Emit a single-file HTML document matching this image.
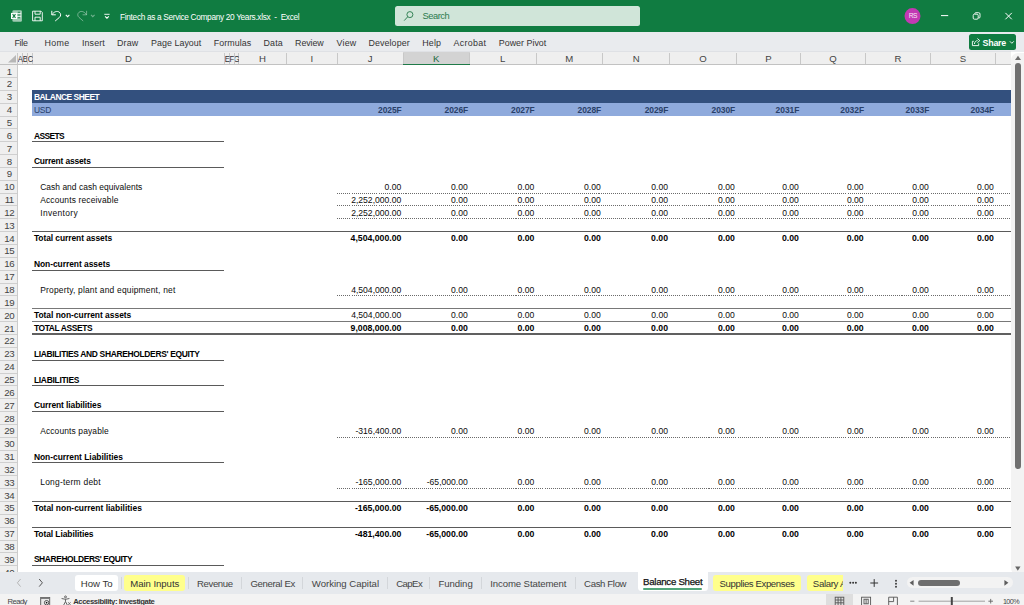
<!DOCTYPE html>
<html lang="en"><head><meta charset="utf-8"><title>Excel - Balance Sheet</title>
<style>
html,body{margin:0;padding:0}
body{width:1024px;height:605px;overflow:hidden;position:relative;background:#fff;font-family:"Liberation Sans", sans-serif;}
.abs{position:absolute}
.t{position:absolute;white-space:pre;line-height:12px;height:12px}
.titlebar{position:absolute;left:0;top:0;width:1024px;height:31.6px;background:#107c41}
.search{position:absolute;left:395.1px;top:5.6px;width:245px;height:20.7px;background:#d0e5d9;border-radius:2.5px}
.ribbon{position:absolute;left:0;top:31.6px;width:1024px;height:20.6px;background:#e9ebee}
.share{position:absolute;left:969px;top:34px;width:47.2px;height:16px;background:#107c41;border-radius:2.5px}
.colhdr{position:absolute;left:0;top:52px;width:1011px;height:12.4px;background:#efefef}
.ch{position:absolute;top:53.2px;height:11.2px;line-height:12px;font-size:9.6px;text-align:center;overflow:hidden;white-space:nowrap}
.ch{display:flex;justify-content:center}
.rowhdr{position:absolute;left:0;top:64.5px;width:17.2px;height:507.600px;background:#efefef;border-right:.9px solid #cbcbcb}
.rh{position:absolute;left:0;width:18.4px;height:12.85px;line-height:13.45px;font-size:9.7px;letter-spacing:-.5px;text-align:center;color:#444}
.dot{position:absolute;height:1px;background:repeating-linear-gradient(90deg,#6a6a6a 0,#6a6a6a .95px,transparent .95px,transparent 1.93px)}
.vtrack{position:absolute;left:1011.4px;top:53px;width:14px;height:521.600px;background:#f3f3f3;border-radius:7px 0 0 7px}
.vthumb{position:absolute;left:1015px;top:63.4px;width:5.900px;height:405.4px;background:#707070;border-radius:3px}
.tabbar{position:absolute;left:0;top:572.1px;width:1024px;height:21.7px;background:#e6e9ed}
.status{position:absolute;left:0;top:593.8px;width:1024px;height:11.2px;background:#f3f3f3}
.clip{position:absolute;left:0;top:0;width:1024px;height:572.1px;overflow:hidden}
</style></head>
<body>
<div class="titlebar"></div>
<svg class="abs" style="left:0;top:0" width="1024" height="32" viewBox="0 0 1024 32" fill="none" stroke="#fff" stroke-width="1">
<!-- excel logo -->
<rect x="12.400" y="10.200" width="9.500" height="11.600" rx="1.300" fill="#fff" fill-opacity=".6" stroke="none"/>
<path d="M17 13.500H21.200M17 16.400H21.200" stroke="#fff" stroke-opacity=".85" stroke-width=".8"/>
<path d="M17.800 12.200H20M17.800 15H20M17.800 17.700H20" stroke="#107c41" stroke-width="1.100" stroke-opacity=".9"/>
<rect x="11" y="12.900" width="6.100" height="6.100" fill="#fff" stroke="none"/>
<path d="M12.600 14.100L15.500 17.800M15.500 14.100L12.600 17.800" stroke="#107c41" stroke-width="1.150"/>
<!-- save -->
<path d="M32.6 11.2H41L42.3 12.5V20.8H32.6Z" stroke-width=".9"/>
<path d="M35 11.2V14.2H40.2V11.2M35 20.8V17.2H40.2V20.8" stroke-width=".9"/>
<!-- undo -->
<path d="M51.8 10.8V14.8H55.8" stroke-width="1"/>
<path d="M52 14.6C54 11.6 57.2 10.6 59.3 12.2C61.2 13.8 61 16 59.4 17.4L55.2 21" stroke-width="1"/>
<path d="M65.800 14.800L67.600 16.600L69.400 14.800" stroke-width="1.100"/>
<!-- redo (dim) -->
<g stroke-opacity=".4"><path d="M86.6 10.8V14.8H82.6" stroke-width="1"/>
<path d="M86.4 14.6C84.4 11.6 81.2 10.6 79.1 12.2C77.2 13.8 77.4 16 79 17.4L83.2 21" stroke-width="1"/>
<path d="M91 14.800L92.800 16.600L94.600 14.800" stroke-width="1.100"/></g>
<!-- customize -->
<path d="M104.300 14.300H109.600" stroke-width=".9"/><path d="M105.100 16.400L106.950 18.200L108.800 16.400" stroke-width="1.100"/>
<circle cx="912.5" cy="16.1" r="8" fill="#c239b3" stroke="none"/>
<!-- window controls -->
<path d="M941 15.6H948.2" stroke-width="1"/>
<rect x="973.2" y="14.2" width="5" height="5" rx="1.2" stroke-width=".9"/>
<path d="M974.8 13.9V13.6Q974.8 12.7 975.8 12.7H978.6Q980 12.7 980 14V17Q980 18 979 18H978.6" stroke-width=".9"/>
<path d="M1005.4 12.900L1011.800 19.3M1011.800 12.900L1005.4 19.3" stroke-width="1"/>
</svg>
<div class="search"></div>
<svg class="abs" style="left:400px;top:8px" width="16" height="16" viewBox="0 0 16 16" fill="none" stroke="#358457" stroke-width="1"><circle cx="9.900" cy="6.600" r="3"/><path d="M7.700 8.800L4.200 12.600"/></svg>
<div class="ribbon"></div>
<div class="share"></div>
<svg class="abs" style="left:969px;top:34px" width="14" height="16" viewBox="0 0 14 16" fill="none" stroke="#fff" stroke-width=".9"><path d="M4.8 7.300H3.400V11.600H9.700V9.400"/><path d="M5.400 10C5.600 8 6.800 6.700 8.600 6.600M8.400 4.500L10.800 6.600L8.400 8.700"/></svg>
<svg class="abs" style="left:1008px;top:38px" width="8" height="8" viewBox="0 0 8 8" fill="none" stroke="#fff" stroke-width=".9"><path d="M1.9 3.3L3.850 5.300L5.800 3.3"/></svg>
<div class="colhdr"></div>
<div class="abs" style="left:0;top:51.4px;width:1011px;height:1px;background:#dfe1e5"></div>
<div class="abs" style="left:403px;top:52px;width:66.5px;height:12.5px;background:#d3d3d3;border-bottom:1.2px solid #1e7145;box-sizing:border-box"></div>
<div class="abs" style="left:17.3px;top:52.6px;width:.9px;height:11.6px;background:#c8c8c8"></div>
<div class="abs" style="left:22.1px;top:52.6px;width:.9px;height:11.6px;background:#c8c8c8"></div>
<div class="abs" style="left:26.8px;top:52.6px;width:.9px;height:11.6px;background:#c8c8c8"></div>
<div class="abs" style="left:32.0px;top:52.6px;width:.9px;height:11.6px;background:#c8c8c8"></div>
<div class="abs" style="left:224.0px;top:52.6px;width:.9px;height:11.6px;background:#c8c8c8"></div>
<div class="abs" style="left:229.0px;top:52.6px;width:.9px;height:11.6px;background:#c8c8c8"></div>
<div class="abs" style="left:234.2px;top:52.6px;width:.9px;height:11.6px;background:#c8c8c8"></div>
<div class="abs" style="left:238.3px;top:52.6px;width:.9px;height:11.6px;background:#c8c8c8"></div>
<div class="abs" style="left:285.9px;top:52.6px;width:.9px;height:11.6px;background:#c8c8c8"></div>
<div class="abs" style="left:337.1px;top:52.6px;width:.9px;height:11.6px;background:#c8c8c8"></div>
<div class="abs" style="left:402.6px;top:52.6px;width:.9px;height:11.6px;background:#c8c8c8"></div>
<div class="abs" style="left:469.1px;top:52.6px;width:.9px;height:11.6px;background:#c8c8c8"></div>
<div class="abs" style="left:535.6px;top:52.6px;width:.9px;height:11.6px;background:#c8c8c8"></div>
<div class="abs" style="left:602.1px;top:52.6px;width:.9px;height:11.6px;background:#c8c8c8"></div>
<div class="abs" style="left:669.3px;top:52.6px;width:.9px;height:11.6px;background:#c8c8c8"></div>
<div class="abs" style="left:736.1px;top:52.6px;width:.9px;height:11.6px;background:#c8c8c8"></div>
<div class="abs" style="left:800.2px;top:52.6px;width:.9px;height:11.6px;background:#c8c8c8"></div>
<div class="abs" style="left:864.9px;top:52.6px;width:.9px;height:11.6px;background:#c8c8c8"></div>
<div class="abs" style="left:930.2px;top:52.6px;width:.9px;height:11.6px;background:#c8c8c8"></div>
<div class="abs" style="left:995.1px;top:52.6px;width:.9px;height:11.6px;background:#c8c8c8"></div>
<div class="abs" style="left:0;top:64px;width:1011px;height:.9px;background:#c2c2c2"></div>
<div class="abs" style="left:403px;top:63.6px;width:66.5px;height:1.3px;background:#1f7a48"></div>
<svg class="abs" style="left:7px;top:54px" width="10" height="10" viewBox="0 0 10 10"><path d="M9 1V8.600H1Z" fill="#b7b7b7"/></svg>
<div class="ch" style="left:17.8px;width:4.9px;color:#333;overflow:hidden"><span style="display:inline-block;transform:scaleX(.8);transform-origin:50% 50%">A</span></div>
<div class="ch" style="left:22.8px;width:4.6px;color:#333;overflow:hidden"><span style="display:inline-block;transform:scaleX(.8);transform-origin:50% 50%">B</span></div>
<div class="ch" style="left:27.5px;width:5.1px;color:#333;overflow:hidden"><span style="display:inline-block;transform:scaleX(.8);transform-origin:50% 50%">C</span></div>
<div class="ch" style="left:32.4px;width:192.0px;color:#444">D</div>
<div class="ch" style="left:224.7px;width:4.9px;color:#333;overflow:hidden"><span style="display:inline-block;transform:scaleX(.8);transform-origin:50% 50%">E</span></div>
<div class="ch" style="left:229.7px;width:5.1px;color:#333;overflow:hidden"><span style="display:inline-block;transform:scaleX(.8);transform-origin:50% 50%">F</span></div>
<div class="ch" style="left:234.9px;width:4.0px;color:#333;overflow:hidden"><span style="display:inline-block;transform:scaleX(.8);transform-origin:50% 50%">G</span></div>
<div class="ch" style="left:238.7px;width:47.6px;color:#444">H</div>
<div class="ch" style="left:286.3px;width:51.2px;color:#444">I</div>
<div class="ch" style="left:337.5px;width:65.5px;color:#444">J</div>
<div class="ch" style="left:403.0px;width:66.5px;color:#1e6b41">K</div>
<div class="ch" style="left:469.5px;width:66.5px;color:#444">L</div>
<div class="ch" style="left:536.0px;width:66.5px;color:#444">M</div>
<div class="ch" style="left:602.5px;width:67.2px;color:#444">N</div>
<div class="ch" style="left:669.7px;width:66.8px;color:#444">O</div>
<div class="ch" style="left:736.5px;width:64.1px;color:#444">P</div>
<div class="ch" style="left:800.6px;width:64.7px;color:#444">Q</div>
<div class="ch" style="left:865.3px;width:65.3px;color:#444">R</div>
<div class="ch" style="left:930.6px;width:64.9px;color:#444">S</div>
<div class="rowhdr"></div>
<div class="rh" style="top:64.55px">1</div>
<div class="abs" style="left:0;top:76.95px;width:17.4px;height:.9px;background:#cfcfcf"></div>
<div class="rh" style="top:77.40px">2</div>
<div class="abs" style="left:0;top:89.80px;width:17.4px;height:.9px;background:#cfcfcf"></div>
<div class="rh" style="top:90.25px">3</div>
<div class="abs" style="left:0;top:102.65px;width:17.4px;height:.9px;background:#cfcfcf"></div>
<div class="rh" style="top:103.10px">4</div>
<div class="abs" style="left:0;top:115.50px;width:17.4px;height:.9px;background:#cfcfcf"></div>
<div class="rh" style="top:115.95px">5</div>
<div class="abs" style="left:0;top:128.35px;width:17.4px;height:.9px;background:#cfcfcf"></div>
<div class="rh" style="top:128.80px">6</div>
<div class="abs" style="left:0;top:141.20px;width:17.4px;height:.9px;background:#cfcfcf"></div>
<div class="rh" style="top:141.65px">7</div>
<div class="abs" style="left:0;top:154.05px;width:17.4px;height:.9px;background:#cfcfcf"></div>
<div class="rh" style="top:154.50px">8</div>
<div class="abs" style="left:0;top:166.90px;width:17.4px;height:.9px;background:#cfcfcf"></div>
<div class="rh" style="top:167.35px">9</div>
<div class="abs" style="left:0;top:179.75px;width:17.4px;height:.9px;background:#cfcfcf"></div>
<div class="rh" style="top:180.20px">10</div>
<div class="abs" style="left:0;top:192.60px;width:17.4px;height:.9px;background:#cfcfcf"></div>
<div class="rh" style="top:193.05px">11</div>
<div class="abs" style="left:0;top:205.45px;width:17.4px;height:.9px;background:#cfcfcf"></div>
<div class="rh" style="top:205.90px">12</div>
<div class="abs" style="left:0;top:218.30px;width:17.4px;height:.9px;background:#cfcfcf"></div>
<div class="rh" style="top:218.75px">13</div>
<div class="abs" style="left:0;top:231.15px;width:17.4px;height:.9px;background:#cfcfcf"></div>
<div class="rh" style="top:231.60px">14</div>
<div class="abs" style="left:0;top:244.00px;width:17.4px;height:.9px;background:#cfcfcf"></div>
<div class="rh" style="top:244.45px">15</div>
<div class="abs" style="left:0;top:256.85px;width:17.4px;height:.9px;background:#cfcfcf"></div>
<div class="rh" style="top:257.30px">16</div>
<div class="abs" style="left:0;top:269.70px;width:17.4px;height:.9px;background:#cfcfcf"></div>
<div class="rh" style="top:270.15px">17</div>
<div class="abs" style="left:0;top:282.55px;width:17.4px;height:.9px;background:#cfcfcf"></div>
<div class="rh" style="top:283.00px">18</div>
<div class="abs" style="left:0;top:295.40px;width:17.4px;height:.9px;background:#cfcfcf"></div>
<div class="rh" style="top:295.85px">19</div>
<div class="abs" style="left:0;top:308.25px;width:17.4px;height:.9px;background:#cfcfcf"></div>
<div class="rh" style="top:308.70px">20</div>
<div class="abs" style="left:0;top:321.10px;width:17.4px;height:.9px;background:#cfcfcf"></div>
<div class="rh" style="top:321.55px">21</div>
<div class="abs" style="left:0;top:333.95px;width:17.4px;height:.9px;background:#cfcfcf"></div>
<div class="rh" style="top:334.40px">22</div>
<div class="abs" style="left:0;top:346.80px;width:17.4px;height:.9px;background:#cfcfcf"></div>
<div class="rh" style="top:347.25px">23</div>
<div class="abs" style="left:0;top:359.65px;width:17.4px;height:.9px;background:#cfcfcf"></div>
<div class="rh" style="top:360.10px">24</div>
<div class="abs" style="left:0;top:372.50px;width:17.4px;height:.9px;background:#cfcfcf"></div>
<div class="rh" style="top:372.95px">25</div>
<div class="abs" style="left:0;top:385.35px;width:17.4px;height:.9px;background:#cfcfcf"></div>
<div class="rh" style="top:385.80px">26</div>
<div class="abs" style="left:0;top:398.20px;width:17.4px;height:.9px;background:#cfcfcf"></div>
<div class="rh" style="top:398.65px">27</div>
<div class="abs" style="left:0;top:411.05px;width:17.4px;height:.9px;background:#cfcfcf"></div>
<div class="rh" style="top:411.50px">28</div>
<div class="abs" style="left:0;top:423.90px;width:17.4px;height:.9px;background:#cfcfcf"></div>
<div class="rh" style="top:424.35px">29</div>
<div class="abs" style="left:0;top:436.75px;width:17.4px;height:.9px;background:#cfcfcf"></div>
<div class="rh" style="top:437.20px">30</div>
<div class="abs" style="left:0;top:449.60px;width:17.4px;height:.9px;background:#cfcfcf"></div>
<div class="rh" style="top:450.05px">31</div>
<div class="abs" style="left:0;top:462.45px;width:17.4px;height:.9px;background:#cfcfcf"></div>
<div class="rh" style="top:462.90px">32</div>
<div class="abs" style="left:0;top:475.30px;width:17.4px;height:.9px;background:#cfcfcf"></div>
<div class="rh" style="top:475.75px">33</div>
<div class="abs" style="left:0;top:488.15px;width:17.4px;height:.9px;background:#cfcfcf"></div>
<div class="rh" style="top:488.60px">34</div>
<div class="abs" style="left:0;top:501.00px;width:17.4px;height:.9px;background:#cfcfcf"></div>
<div class="rh" style="top:501.45px">35</div>
<div class="abs" style="left:0;top:513.85px;width:17.4px;height:.9px;background:#cfcfcf"></div>
<div class="rh" style="top:514.30px">36</div>
<div class="abs" style="left:0;top:526.70px;width:17.4px;height:.9px;background:#cfcfcf"></div>
<div class="rh" style="top:527.15px">37</div>
<div class="abs" style="left:0;top:539.55px;width:17.4px;height:.9px;background:#cfcfcf"></div>
<div class="rh" style="top:540.00px">38</div>
<div class="abs" style="left:0;top:552.40px;width:17.4px;height:.9px;background:#cfcfcf"></div>
<div class="rh" style="top:552.85px">39</div>
<div class="abs" style="left:0;top:565.25px;width:17.4px;height:.9px;background:#cfcfcf"></div>
<div class="rh" style="top:565.70px">40</div>
<div class="abs" style="left:0;top:578.10px;width:17.4px;height:.9px;background:#cfcfcf"></div>
<div class="abs" style="left:32.3px;top:90.05px;width:978.7px;height:13.05px;background:#33507e"></div>
<div class="abs" style="left:32.3px;top:103.10px;width:978.7px;height:13.15px;background:#8faadc"></div>
<div class="abs" style="left:32.3px;top:141.20px;width:192.1px;height:0.9px;background:#5a5a5a"></div>
<div class="abs" style="left:32.3px;top:166.90px;width:192.1px;height:0.9px;background:#5a5a5a"></div>
<div class="abs" style="left:32.3px;top:269.70px;width:192.1px;height:0.9px;background:#5a5a5a"></div>
<div class="abs" style="left:32.3px;top:359.65px;width:192.1px;height:0.9px;background:#5a5a5a"></div>
<div class="abs" style="left:32.3px;top:385.35px;width:192.1px;height:0.9px;background:#5a5a5a"></div>
<div class="abs" style="left:32.3px;top:411.05px;width:192.1px;height:0.9px;background:#5a5a5a"></div>
<div class="abs" style="left:32.3px;top:462.45px;width:192.1px;height:0.9px;background:#5a5a5a"></div>
<div class="abs" style="left:32.3px;top:565.25px;width:192.1px;height:0.9px;background:#5a5a5a"></div>
<div class="abs" style="left:32.3px;top:231.15px;width:978.3px;height:0.9px;background:#5a5a5a"></div>
<div class="abs" style="left:32.3px;top:501.00px;width:978.3px;height:0.9px;background:#5a5a5a"></div>
<div class="abs" style="left:32.3px;top:526.70px;width:978.3px;height:0.9px;background:#5a5a5a"></div>
<div class="abs" style="left:32.3px;top:308.20px;width:978.3px;height:1px;background:#787878"></div>
<div class="abs" style="left:32.3px;top:321.05px;width:978.3px;height:1px;background:#787878"></div>
<div class="abs" style="left:32.3px;top:333.35px;width:978.3px;height:1.7px;background:#606060"></div>
<div class="dot" style="left:337.2px;top:192.55px;width:673.2px"></div>
<div class="dot" style="left:337.2px;top:205.40px;width:673.2px"></div>
<div class="dot" style="left:337.2px;top:218.25px;width:673.2px"></div>
<div class="dot" style="left:337.2px;top:295.35px;width:673.2px"></div>
<div class="dot" style="left:337.2px;top:436.70px;width:673.2px"></div>
<div class="dot" style="left:337.2px;top:488.10px;width:673.2px"></div>
<div class="vtrack"></div><div class="vthumb"></div>
<svg class="abs" style="left:1014px;top:55px" width="8" height="6" viewBox="0 0 8 6"><path d="M4 .8L7 5H1Z" fill="#6e6e6e"/></svg>
<svg class="abs" style="left:1014px;top:565px" width="8" height="7" viewBox="0 0 8 7"><path d="M3.800 5.800L6.500 1.400H1.100Z" fill="#666"/></svg>
<div class="tabbar"></div>
<svg class="abs" style="left:12px;top:574px" width="40" height="16" viewBox="0 0 40 16" fill="none" stroke-width="1"><path d="M8.6 5L5.400 8.800L8.600 12.600" stroke="#b5b5b5"/><path d="M27.200 5L30.400 8.800L27.200 12.600" stroke="#555"/></svg>
<div class="abs" style="left:75.2px;top:575.2px;width:43.0px;height:15.4px;background:#fff;border-radius:3px"></div>
<div class="abs" style="left:124.4px;top:575.2px;width:61.1px;height:15.4px;background:#ffff8c;border-radius:3px"></div>
<div class="abs" style="left:121.1px;top:577px;width:.9px;height:11.5px;background:#d3d6da"></div>
<div class="abs" style="left:188.2px;top:577px;width:.9px;height:11.5px;background:#d3d6da"></div>
<div class="abs" style="left:241.1px;top:577px;width:.9px;height:11.5px;background:#d3d6da"></div>
<div class="abs" style="left:301.9px;top:577px;width:.9px;height:11.5px;background:#d3d6da"></div>
<div class="abs" style="left:387.2px;top:577px;width:.9px;height:11.5px;background:#d3d6da"></div>
<div class="abs" style="left:429.4px;top:577px;width:.9px;height:11.5px;background:#d3d6da"></div>
<div class="abs" style="left:481.3px;top:577px;width:.9px;height:11.5px;background:#d3d6da"></div>
<div class="abs" style="left:575.1px;top:577px;width:.9px;height:11.5px;background:#d3d6da"></div>
<div class="abs" style="left:637.6px;top:572px;width:70.2px;height:18.6px;background:#fff;border-radius:0 0 3.5px 3.5px"></div>
<div class="abs" style="left:643px;top:588px;width:59px;height:1.7px;background:#52a67a;border-radius:1px"></div>
<div class="abs" style="left:713.3px;top:575.2px;width:87.5px;height:15.4px;background:#ffff8c;border-radius:3px"></div>
<div class="abs" style="left:807px;top:575.2px;width:35.6px;height:15.4px;background:#ffff8c;border-radius:3px 0 0 3px;overflow:hidden"></div>
<div class="abs" style="left:807px;top:575.2px;width:35.6px;height:15.4px;overflow:hidden"><span id="salary" style="position:absolute;left:5.8px;top:2.7px;font-size:9.6px;color:#333;white-space:pre;line-height:12px;letter-spacing:-.32px">Salary As</span></div>
<svg class="abs" style="left:846px;top:574px" width="60" height="18" viewBox="0 0 60 18"><g fill="#333"><circle cx="4.3" cy="8.8" r="1"/><circle cx="7.1" cy="8.8" r="1"/><circle cx="9.9" cy="8.8" r="1"/><circle cx="50" cy="6.7" r=".95"/><circle cx="50" cy="9.7" r=".95"/><circle cx="50" cy="12.7" r=".95"/></g><path d="M24.3 9H32.1M28.2 5.100V12.900" stroke="#333" stroke-width="1" fill="none"/></svg>
<div class="abs" style="left:907px;top:577px;width:105.600px;height:11.4px;background:#f3f3f3;border-radius:6px"></div>
<div class="abs" style="left:917.8px;top:580px;width:42.6px;height:6px;background:#6e6e6e;border-radius:3px"></div>
<svg class="abs" style="left:909px;top:579px" width="102" height="8" viewBox="0 0 102 8"><path d="M.6 3.8L4.600 .9V6.700Z M99.400 3.8L95.4 .9V6.700Z" fill="#5e5e5e"/></svg>
<div class="status"></div>
<svg class="abs" style="left:38px;top:594px" width="36" height="11" viewBox="0 0 36 11" fill="none" stroke="#555" stroke-width=".9"><rect x="2.700" y="3.500" width="9" height="9" fill="#e9e9e9"/><path d="M2.700 4.100H11.700" stroke-width="1.700" stroke="#777"/><circle cx="8.600" cy="8.700" r="2.200" fill="#fff" stroke="#444"/><circle cx="8.600" cy="8.700" r=".9" fill="#111" stroke="none"/><circle cx="27.500" cy="2.900" r=".95"/><path d="M23.600 4.500L27.500 5.300L31.400 4.500M27.500 5.300V7.600L25.700 11M27.500 7.600L29.300 11"/><path d="M30.200 8.200L32.600 11M32.600 8.200L30.200 11" stroke-width=".7"/></svg>
<div class="abs" style="left:826px;top:594px;width:26.5px;height:11px;background:#dedede"></div>
<svg class="abs" style="left:826px;top:594px" width="198" height="11" viewBox="0 0 198 11" fill="none" stroke="#555" stroke-width=".9">
<rect x="9.200" y="3.200" width="8.6" height="8.4"/><path d="M9.200 6H17.800M9.200 8.800H17.800M12.100 3.200V11M14.900 3.200V11"/>
<rect x="35.600" y="3.200" width="9" height="8.4"/><rect x="38" y="5.200" width="4.2" height="4.6"/><path d="M40.100 5.200V9.800"/>
<path d="M62.700 11.600V3.200H71.400V11.600M67.600 3.200V7.600H62.700"/>
<path d="M84.2 7.200H88.400" stroke="#777"/><path d="M92.600 7.200H159" stroke="#8a8a8a" stroke-width=".8"/>
<path d="M125.800 3V11" stroke="#444" stroke-width="2"/>
<path d="M162.400 7.200H167M164.700 4.900V9.500" stroke="#666"/></svg>
<div class="t" id="t0" style="top:10.70px;font-size:8.3px;font-weight:400;color:#fff;letter-spacing:-0.332px;left:120.10px;">Fintech as a Service Company 20 Years.xlsx  -  Excel</div>
<div class="t" id="t1" style="top:9.90px;font-size:9.3px;font-weight:400;color:#2b7a4e;letter-spacing:-0.445px;left:422.50px;">Search</div>
<div class="t" id="t2" style="top:10.40px;font-size:6.6px;font-weight:400;color:#fbe9f8;letter-spacing:-0.600px;left:908.80px;">RS</div>
<div class="t" id="t3" style="top:36.60px;font-size:8.9px;font-weight:400;color:#343434;letter-spacing:-0.228px;left:14.40px;">File</div>
<div class="t" id="t4" style="top:36.60px;font-size:8.9px;font-weight:400;color:#343434;letter-spacing:0.403px;left:44.40px;">Home</div>
<div class="t" id="t5" style="top:36.60px;font-size:8.9px;font-weight:400;color:#343434;letter-spacing:0.133px;left:81.90px;">Insert</div>
<div class="t" id="t6" style="top:36.60px;font-size:8.9px;font-weight:400;color:#343434;letter-spacing:0.120px;left:117.10px;">Draw</div>
<div class="t" id="t7" style="top:36.60px;font-size:8.9px;font-weight:400;color:#343434;letter-spacing:0.032px;left:151.10px;">Page Layout</div>
<div class="t" id="t8" style="top:36.60px;font-size:8.9px;font-weight:400;color:#343434;letter-spacing:0.075px;left:213.80px;">Formulas</div>
<div class="t" id="t9" style="top:36.60px;font-size:8.9px;font-weight:400;color:#343434;letter-spacing:0.112px;left:263.60px;">Data</div>
<div class="t" id="t10" style="top:36.60px;font-size:8.9px;font-weight:400;color:#343434;letter-spacing:-0.085px;left:295.10px;">Review</div>
<div class="t" id="t11" style="top:36.60px;font-size:8.9px;font-weight:400;color:#343434;letter-spacing:0.255px;left:336.40px;">View</div>
<div class="t" id="t12" style="top:36.60px;font-size:8.9px;font-weight:400;color:#343434;letter-spacing:0.103px;left:368.40px;">Developer</div>
<div class="t" id="t13" style="top:36.60px;font-size:8.9px;font-weight:400;color:#343434;letter-spacing:0.159px;left:422.30px;">Help</div>
<div class="t" id="t14" style="top:36.60px;font-size:8.9px;font-weight:400;color:#343434;letter-spacing:0.301px;left:453.60px;">Acrobat</div>
<div class="t" id="t15" style="top:36.60px;font-size:8.9px;font-weight:400;color:#343434;letter-spacing:0.013px;left:498.80px;">Power Pivot</div>
<div class="t" id="t16" style="top:36.80px;font-size:8.9px;font-weight:700;color:#fff;letter-spacing:-0.274px;left:982.60px;">Share</div>
<div class="t" id="t17" style="top:90.97px;font-size:8.45px;font-weight:700;color:#fff;letter-spacing:-0.487px;left:33.90px;">BALANCE SHEET</div>
<div class="t" id="t18" style="top:103.82px;font-size:8.45px;font-weight:400;color:#294069;letter-spacing:-0.143px;left:33.90px;">USD</div>
<div class="t" id="t19" style="top:103.82px;font-size:8.45px;font-weight:700;color:#294069;letter-spacing:-0.048px;left:378.00px;">2025F</div>
<div class="t" id="t20" style="top:103.82px;font-size:8.45px;font-weight:700;color:#294069;letter-spacing:-0.048px;left:444.50px;">2026F</div>
<div class="t" id="t21" style="top:103.82px;font-size:8.45px;font-weight:700;color:#294069;letter-spacing:-0.048px;left:511.00px;">2027F</div>
<div class="t" id="t22" style="top:103.82px;font-size:8.45px;font-weight:700;color:#294069;letter-spacing:-0.048px;left:577.50px;">2028F</div>
<div class="t" id="t23" style="top:103.82px;font-size:8.45px;font-weight:700;color:#294069;letter-spacing:-0.048px;left:644.70px;">2029F</div>
<div class="t" id="t24" style="top:103.82px;font-size:8.45px;font-weight:700;color:#294069;letter-spacing:-0.048px;left:711.50px;">2030F</div>
<div class="t" id="t25" style="top:103.82px;font-size:8.45px;font-weight:700;color:#294069;letter-spacing:-0.048px;left:775.60px;">2031F</div>
<div class="t" id="t26" style="top:103.82px;font-size:8.45px;font-weight:700;color:#294069;letter-spacing:-0.048px;left:840.30px;">2032F</div>
<div class="t" id="t27" style="top:103.82px;font-size:8.45px;font-weight:700;color:#294069;letter-spacing:-0.048px;left:905.60px;">2033F</div>
<div class="t" id="t28" style="top:103.82px;font-size:8.45px;font-weight:700;color:#294069;letter-spacing:-0.048px;left:970.50px;">2034F</div>
<div class="t" id="t29" style="top:129.53px;font-size:8.45px;font-weight:700;color:#000;letter-spacing:-0.594px;left:33.90px;">ASSETS</div>
<div class="t" id="t30" style="top:155.23px;font-size:8.45px;font-weight:700;color:#000;letter-spacing:-0.157px;left:33.90px;">Current assets</div>
<div class="t" id="t31" style="top:232.32px;font-size:8.45px;font-weight:700;color:#000;letter-spacing:-0.068px;left:33.90px;">Total current assets</div>
<div class="t" id="t32" style="top:258.03px;font-size:8.45px;font-weight:700;color:#000;letter-spacing:-0.039px;left:33.90px;">Non-current assets</div>
<div class="t" id="t33" style="top:309.43px;font-size:8.45px;font-weight:700;color:#000;letter-spacing:-0.018px;left:33.90px;">Total non-current assets</div>
<div class="t" id="t34" style="top:322.28px;font-size:8.45px;font-weight:700;color:#000;letter-spacing:-0.382px;left:33.90px;">TOTAL ASSETS</div>
<div class="t" id="t35" style="top:347.98px;font-size:8.45px;font-weight:700;color:#000;letter-spacing:-0.327px;left:33.90px;">LIABILITIES AND SHAREHOLDERS&#x27; EQUITY</div>
<div class="t" id="t36" style="top:373.68px;font-size:8.45px;font-weight:700;color:#000;letter-spacing:-0.280px;left:33.90px;">LIABILITIES</div>
<div class="t" id="t37" style="top:399.38px;font-size:8.45px;font-weight:700;color:#000;letter-spacing:-0.080px;left:33.90px;">Current liabilities</div>
<div class="t" id="t38" style="top:450.78px;font-size:8.45px;font-weight:700;color:#000;letter-spacing:-0.024px;left:33.90px;">Non-current Liabilities</div>
<div class="t" id="t39" style="top:502.18px;font-size:8.45px;font-weight:700;color:#000;letter-spacing:0.011px;left:33.90px;">Total non-current liabilities</div>
<div class="t" id="t40" style="top:527.87px;font-size:8.45px;font-weight:700;color:#000;letter-spacing:-0.070px;left:33.90px;">Total Liabilities</div>
<div class="t" id="t41" style="top:553.37px;font-size:8.45px;font-weight:700;color:#000;letter-spacing:-0.408px;left:33.90px;">SHAREHOLDERS&#x27; EQUITY</div>
<div class="t" id="t42" style="top:180.93px;font-size:8.45px;font-weight:400;color:#0c0c0c;letter-spacing:0.031px;left:40.20px;">Cash and cash equivalents</div>
<div class="t" id="t43" style="top:193.78px;font-size:8.45px;font-weight:400;color:#0c0c0c;letter-spacing:0.147px;left:40.20px;">Accounts receivable</div>
<div class="t" id="t44" style="top:206.62px;font-size:8.45px;font-weight:400;color:#0c0c0c;letter-spacing:0.353px;left:40.20px;">Inventory</div>
<div class="t" id="t45" style="top:283.73px;font-size:8.45px;font-weight:400;color:#0c0c0c;letter-spacing:0.190px;left:40.20px;">Property, plant and equipment, net</div>
<div class="t" id="t46" style="top:425.08px;font-size:8.45px;font-weight:400;color:#0c0c0c;letter-spacing:0.124px;left:40.20px;">Accounts payable</div>
<div class="t" id="t47" style="top:476.48px;font-size:8.45px;font-weight:400;color:#0c0c0c;letter-spacing:0.248px;left:40.20px;">Long-term debt</div>
<div class="t" id="t48" style="top:180.93px;font-size:8.6px;font-weight:400;color:#0c0c0c;letter-spacing:0.000px;right:622.70px;">0.00</div>
<div class="t" id="t49" style="top:180.93px;font-size:8.6px;font-weight:400;color:#0c0c0c;letter-spacing:0.000px;right:556.20px;">0.00</div>
<div class="t" id="t50" style="top:180.93px;font-size:8.6px;font-weight:400;color:#0c0c0c;letter-spacing:0.000px;right:489.70px;">0.00</div>
<div class="t" id="t51" style="top:180.93px;font-size:8.6px;font-weight:400;color:#0c0c0c;letter-spacing:0.000px;right:423.20px;">0.00</div>
<div class="t" id="t52" style="top:180.93px;font-size:8.6px;font-weight:400;color:#0c0c0c;letter-spacing:0.000px;right:356.00px;">0.00</div>
<div class="t" id="t53" style="top:180.93px;font-size:8.6px;font-weight:400;color:#0c0c0c;letter-spacing:0.000px;right:289.20px;">0.00</div>
<div class="t" id="t54" style="top:180.93px;font-size:8.6px;font-weight:400;color:#0c0c0c;letter-spacing:0.000px;right:225.10px;">0.00</div>
<div class="t" id="t55" style="top:180.93px;font-size:8.6px;font-weight:400;color:#0c0c0c;letter-spacing:0.000px;right:160.40px;">0.00</div>
<div class="t" id="t56" style="top:180.93px;font-size:8.6px;font-weight:400;color:#0c0c0c;letter-spacing:0.000px;right:95.10px;">0.00</div>
<div class="t" id="t57" style="top:180.93px;font-size:8.6px;font-weight:400;color:#0c0c0c;letter-spacing:0.000px;right:30.20px;">0.00</div>
<div class="t" id="t58" style="top:193.78px;font-size:8.6px;font-weight:400;color:#0c0c0c;letter-spacing:0.000px;right:622.70px;">2,252,000.00</div>
<div class="t" id="t59" style="top:193.78px;font-size:8.6px;font-weight:400;color:#0c0c0c;letter-spacing:0.000px;right:556.20px;">0.00</div>
<div class="t" id="t60" style="top:193.78px;font-size:8.6px;font-weight:400;color:#0c0c0c;letter-spacing:0.000px;right:489.70px;">0.00</div>
<div class="t" id="t61" style="top:193.78px;font-size:8.6px;font-weight:400;color:#0c0c0c;letter-spacing:0.000px;right:423.20px;">0.00</div>
<div class="t" id="t62" style="top:193.78px;font-size:8.6px;font-weight:400;color:#0c0c0c;letter-spacing:0.000px;right:356.00px;">0.00</div>
<div class="t" id="t63" style="top:193.78px;font-size:8.6px;font-weight:400;color:#0c0c0c;letter-spacing:0.000px;right:289.20px;">0.00</div>
<div class="t" id="t64" style="top:193.78px;font-size:8.6px;font-weight:400;color:#0c0c0c;letter-spacing:0.000px;right:225.10px;">0.00</div>
<div class="t" id="t65" style="top:193.78px;font-size:8.6px;font-weight:400;color:#0c0c0c;letter-spacing:0.000px;right:160.40px;">0.00</div>
<div class="t" id="t66" style="top:193.78px;font-size:8.6px;font-weight:400;color:#0c0c0c;letter-spacing:0.000px;right:95.10px;">0.00</div>
<div class="t" id="t67" style="top:193.78px;font-size:8.6px;font-weight:400;color:#0c0c0c;letter-spacing:0.000px;right:30.20px;">0.00</div>
<div class="t" id="t68" style="top:206.62px;font-size:8.6px;font-weight:400;color:#0c0c0c;letter-spacing:0.000px;right:622.70px;">2,252,000.00</div>
<div class="t" id="t69" style="top:206.62px;font-size:8.6px;font-weight:400;color:#0c0c0c;letter-spacing:0.000px;right:556.20px;">0.00</div>
<div class="t" id="t70" style="top:206.62px;font-size:8.6px;font-weight:400;color:#0c0c0c;letter-spacing:0.000px;right:489.70px;">0.00</div>
<div class="t" id="t71" style="top:206.62px;font-size:8.6px;font-weight:400;color:#0c0c0c;letter-spacing:0.000px;right:423.20px;">0.00</div>
<div class="t" id="t72" style="top:206.62px;font-size:8.6px;font-weight:400;color:#0c0c0c;letter-spacing:0.000px;right:356.00px;">0.00</div>
<div class="t" id="t73" style="top:206.62px;font-size:8.6px;font-weight:400;color:#0c0c0c;letter-spacing:0.000px;right:289.20px;">0.00</div>
<div class="t" id="t74" style="top:206.62px;font-size:8.6px;font-weight:400;color:#0c0c0c;letter-spacing:0.000px;right:225.10px;">0.00</div>
<div class="t" id="t75" style="top:206.62px;font-size:8.6px;font-weight:400;color:#0c0c0c;letter-spacing:0.000px;right:160.40px;">0.00</div>
<div class="t" id="t76" style="top:206.62px;font-size:8.6px;font-weight:400;color:#0c0c0c;letter-spacing:0.000px;right:95.10px;">0.00</div>
<div class="t" id="t77" style="top:206.62px;font-size:8.6px;font-weight:400;color:#0c0c0c;letter-spacing:0.000px;right:30.20px;">0.00</div>
<div class="t" id="t78" style="top:232.32px;font-size:8.7px;font-weight:700;color:#000;letter-spacing:0.000px;right:622.70px;">4,504,000.00</div>
<div class="t" id="t79" style="top:232.32px;font-size:8.7px;font-weight:700;color:#000;letter-spacing:0.000px;right:556.20px;">0.00</div>
<div class="t" id="t80" style="top:232.32px;font-size:8.7px;font-weight:700;color:#000;letter-spacing:0.000px;right:489.70px;">0.00</div>
<div class="t" id="t81" style="top:232.32px;font-size:8.7px;font-weight:700;color:#000;letter-spacing:0.000px;right:423.20px;">0.00</div>
<div class="t" id="t82" style="top:232.32px;font-size:8.7px;font-weight:700;color:#000;letter-spacing:0.000px;right:356.00px;">0.00</div>
<div class="t" id="t83" style="top:232.32px;font-size:8.7px;font-weight:700;color:#000;letter-spacing:0.000px;right:289.20px;">0.00</div>
<div class="t" id="t84" style="top:232.32px;font-size:8.7px;font-weight:700;color:#000;letter-spacing:0.000px;right:225.10px;">0.00</div>
<div class="t" id="t85" style="top:232.32px;font-size:8.7px;font-weight:700;color:#000;letter-spacing:0.000px;right:160.40px;">0.00</div>
<div class="t" id="t86" style="top:232.32px;font-size:8.7px;font-weight:700;color:#000;letter-spacing:0.000px;right:95.10px;">0.00</div>
<div class="t" id="t87" style="top:232.32px;font-size:8.7px;font-weight:700;color:#000;letter-spacing:0.000px;right:30.20px;">0.00</div>
<div class="t" id="t88" style="top:283.73px;font-size:8.6px;font-weight:400;color:#0c0c0c;letter-spacing:0.000px;right:622.70px;">4,504,000.00</div>
<div class="t" id="t89" style="top:283.73px;font-size:8.6px;font-weight:400;color:#0c0c0c;letter-spacing:0.000px;right:556.20px;">0.00</div>
<div class="t" id="t90" style="top:283.73px;font-size:8.6px;font-weight:400;color:#0c0c0c;letter-spacing:0.000px;right:489.70px;">0.00</div>
<div class="t" id="t91" style="top:283.73px;font-size:8.6px;font-weight:400;color:#0c0c0c;letter-spacing:0.000px;right:423.20px;">0.00</div>
<div class="t" id="t92" style="top:283.73px;font-size:8.6px;font-weight:400;color:#0c0c0c;letter-spacing:0.000px;right:356.00px;">0.00</div>
<div class="t" id="t93" style="top:283.73px;font-size:8.6px;font-weight:400;color:#0c0c0c;letter-spacing:0.000px;right:289.20px;">0.00</div>
<div class="t" id="t94" style="top:283.73px;font-size:8.6px;font-weight:400;color:#0c0c0c;letter-spacing:0.000px;right:225.10px;">0.00</div>
<div class="t" id="t95" style="top:283.73px;font-size:8.6px;font-weight:400;color:#0c0c0c;letter-spacing:0.000px;right:160.40px;">0.00</div>
<div class="t" id="t96" style="top:283.73px;font-size:8.6px;font-weight:400;color:#0c0c0c;letter-spacing:0.000px;right:95.10px;">0.00</div>
<div class="t" id="t97" style="top:283.73px;font-size:8.6px;font-weight:400;color:#0c0c0c;letter-spacing:0.000px;right:30.20px;">0.00</div>
<div class="t" id="t98" style="top:309.43px;font-size:8.6px;font-weight:400;color:#0c0c0c;letter-spacing:0.000px;right:622.70px;">4,504,000.00</div>
<div class="t" id="t99" style="top:309.43px;font-size:8.6px;font-weight:400;color:#0c0c0c;letter-spacing:0.000px;right:556.20px;">0.00</div>
<div class="t" id="t100" style="top:309.43px;font-size:8.6px;font-weight:400;color:#0c0c0c;letter-spacing:0.000px;right:489.70px;">0.00</div>
<div class="t" id="t101" style="top:309.43px;font-size:8.6px;font-weight:400;color:#0c0c0c;letter-spacing:0.000px;right:423.20px;">0.00</div>
<div class="t" id="t102" style="top:309.43px;font-size:8.6px;font-weight:400;color:#0c0c0c;letter-spacing:0.000px;right:356.00px;">0.00</div>
<div class="t" id="t103" style="top:309.43px;font-size:8.6px;font-weight:400;color:#0c0c0c;letter-spacing:0.000px;right:289.20px;">0.00</div>
<div class="t" id="t104" style="top:309.43px;font-size:8.6px;font-weight:400;color:#0c0c0c;letter-spacing:0.000px;right:225.10px;">0.00</div>
<div class="t" id="t105" style="top:309.43px;font-size:8.6px;font-weight:400;color:#0c0c0c;letter-spacing:0.000px;right:160.40px;">0.00</div>
<div class="t" id="t106" style="top:309.43px;font-size:8.6px;font-weight:400;color:#0c0c0c;letter-spacing:0.000px;right:95.10px;">0.00</div>
<div class="t" id="t107" style="top:309.43px;font-size:8.6px;font-weight:400;color:#0c0c0c;letter-spacing:0.000px;right:30.20px;">0.00</div>
<div class="t" id="t108" style="top:322.28px;font-size:8.7px;font-weight:700;color:#000;letter-spacing:0.000px;right:622.70px;">9,008,000.00</div>
<div class="t" id="t109" style="top:322.28px;font-size:8.7px;font-weight:700;color:#000;letter-spacing:0.000px;right:556.20px;">0.00</div>
<div class="t" id="t110" style="top:322.28px;font-size:8.7px;font-weight:700;color:#000;letter-spacing:0.000px;right:489.70px;">0.00</div>
<div class="t" id="t111" style="top:322.28px;font-size:8.7px;font-weight:700;color:#000;letter-spacing:0.000px;right:423.20px;">0.00</div>
<div class="t" id="t112" style="top:322.28px;font-size:8.7px;font-weight:700;color:#000;letter-spacing:0.000px;right:356.00px;">0.00</div>
<div class="t" id="t113" style="top:322.28px;font-size:8.7px;font-weight:700;color:#000;letter-spacing:0.000px;right:289.20px;">0.00</div>
<div class="t" id="t114" style="top:322.28px;font-size:8.7px;font-weight:700;color:#000;letter-spacing:0.000px;right:225.10px;">0.00</div>
<div class="t" id="t115" style="top:322.28px;font-size:8.7px;font-weight:700;color:#000;letter-spacing:0.000px;right:160.40px;">0.00</div>
<div class="t" id="t116" style="top:322.28px;font-size:8.7px;font-weight:700;color:#000;letter-spacing:0.000px;right:95.10px;">0.00</div>
<div class="t" id="t117" style="top:322.28px;font-size:8.7px;font-weight:700;color:#000;letter-spacing:0.000px;right:30.20px;">0.00</div>
<div class="t" id="t118" style="top:425.08px;font-size:8.6px;font-weight:400;color:#0c0c0c;letter-spacing:0.000px;right:622.70px;">-316,400.00</div>
<div class="t" id="t119" style="top:425.08px;font-size:8.6px;font-weight:400;color:#0c0c0c;letter-spacing:0.000px;right:556.20px;">0.00</div>
<div class="t" id="t120" style="top:425.08px;font-size:8.6px;font-weight:400;color:#0c0c0c;letter-spacing:0.000px;right:489.70px;">0.00</div>
<div class="t" id="t121" style="top:425.08px;font-size:8.6px;font-weight:400;color:#0c0c0c;letter-spacing:0.000px;right:423.20px;">0.00</div>
<div class="t" id="t122" style="top:425.08px;font-size:8.6px;font-weight:400;color:#0c0c0c;letter-spacing:0.000px;right:356.00px;">0.00</div>
<div class="t" id="t123" style="top:425.08px;font-size:8.6px;font-weight:400;color:#0c0c0c;letter-spacing:0.000px;right:289.20px;">0.00</div>
<div class="t" id="t124" style="top:425.08px;font-size:8.6px;font-weight:400;color:#0c0c0c;letter-spacing:0.000px;right:225.10px;">0.00</div>
<div class="t" id="t125" style="top:425.08px;font-size:8.6px;font-weight:400;color:#0c0c0c;letter-spacing:0.000px;right:160.40px;">0.00</div>
<div class="t" id="t126" style="top:425.08px;font-size:8.6px;font-weight:400;color:#0c0c0c;letter-spacing:0.000px;right:95.10px;">0.00</div>
<div class="t" id="t127" style="top:425.08px;font-size:8.6px;font-weight:400;color:#0c0c0c;letter-spacing:0.000px;right:30.20px;">0.00</div>
<div class="t" id="t128" style="top:476.48px;font-size:8.6px;font-weight:400;color:#0c0c0c;letter-spacing:0.000px;right:622.70px;">-165,000.00</div>
<div class="t" id="t129" style="top:476.48px;font-size:8.6px;font-weight:400;color:#0c0c0c;letter-spacing:0.000px;right:556.20px;">-65,000.00</div>
<div class="t" id="t130" style="top:476.48px;font-size:8.6px;font-weight:400;color:#0c0c0c;letter-spacing:0.000px;right:489.70px;">0.00</div>
<div class="t" id="t131" style="top:476.48px;font-size:8.6px;font-weight:400;color:#0c0c0c;letter-spacing:0.000px;right:423.20px;">0.00</div>
<div class="t" id="t132" style="top:476.48px;font-size:8.6px;font-weight:400;color:#0c0c0c;letter-spacing:0.000px;right:356.00px;">0.00</div>
<div class="t" id="t133" style="top:476.48px;font-size:8.6px;font-weight:400;color:#0c0c0c;letter-spacing:0.000px;right:289.20px;">0.00</div>
<div class="t" id="t134" style="top:476.48px;font-size:8.6px;font-weight:400;color:#0c0c0c;letter-spacing:0.000px;right:225.10px;">0.00</div>
<div class="t" id="t135" style="top:476.48px;font-size:8.6px;font-weight:400;color:#0c0c0c;letter-spacing:0.000px;right:160.40px;">0.00</div>
<div class="t" id="t136" style="top:476.48px;font-size:8.6px;font-weight:400;color:#0c0c0c;letter-spacing:0.000px;right:95.10px;">0.00</div>
<div class="t" id="t137" style="top:476.48px;font-size:8.6px;font-weight:400;color:#0c0c0c;letter-spacing:0.000px;right:30.20px;">0.00</div>
<div class="t" id="t138" style="top:502.18px;font-size:8.7px;font-weight:700;color:#000;letter-spacing:0.000px;right:622.70px;">-165,000.00</div>
<div class="t" id="t139" style="top:502.18px;font-size:8.7px;font-weight:700;color:#000;letter-spacing:0.000px;right:556.20px;">-65,000.00</div>
<div class="t" id="t140" style="top:502.18px;font-size:8.7px;font-weight:700;color:#000;letter-spacing:0.000px;right:489.70px;">0.00</div>
<div class="t" id="t141" style="top:502.18px;font-size:8.7px;font-weight:700;color:#000;letter-spacing:0.000px;right:423.20px;">0.00</div>
<div class="t" id="t142" style="top:502.18px;font-size:8.7px;font-weight:700;color:#000;letter-spacing:0.000px;right:356.00px;">0.00</div>
<div class="t" id="t143" style="top:502.18px;font-size:8.7px;font-weight:700;color:#000;letter-spacing:0.000px;right:289.20px;">0.00</div>
<div class="t" id="t144" style="top:502.18px;font-size:8.7px;font-weight:700;color:#000;letter-spacing:0.000px;right:225.10px;">0.00</div>
<div class="t" id="t145" style="top:502.18px;font-size:8.7px;font-weight:700;color:#000;letter-spacing:0.000px;right:160.40px;">0.00</div>
<div class="t" id="t146" style="top:502.18px;font-size:8.7px;font-weight:700;color:#000;letter-spacing:0.000px;right:95.10px;">0.00</div>
<div class="t" id="t147" style="top:502.18px;font-size:8.7px;font-weight:700;color:#000;letter-spacing:0.000px;right:30.20px;">0.00</div>
<div class="t" id="t148" style="top:527.87px;font-size:8.7px;font-weight:700;color:#000;letter-spacing:0.000px;right:622.70px;">-481,400.00</div>
<div class="t" id="t149" style="top:527.87px;font-size:8.7px;font-weight:700;color:#000;letter-spacing:0.000px;right:556.20px;">-65,000.00</div>
<div class="t" id="t150" style="top:527.87px;font-size:8.7px;font-weight:700;color:#000;letter-spacing:0.000px;right:489.70px;">0.00</div>
<div class="t" id="t151" style="top:527.87px;font-size:8.7px;font-weight:700;color:#000;letter-spacing:0.000px;right:423.20px;">0.00</div>
<div class="t" id="t152" style="top:527.87px;font-size:8.7px;font-weight:700;color:#000;letter-spacing:0.000px;right:356.00px;">0.00</div>
<div class="t" id="t153" style="top:527.87px;font-size:8.7px;font-weight:700;color:#000;letter-spacing:0.000px;right:289.20px;">0.00</div>
<div class="t" id="t154" style="top:527.87px;font-size:8.7px;font-weight:700;color:#000;letter-spacing:0.000px;right:225.10px;">0.00</div>
<div class="t" id="t155" style="top:527.87px;font-size:8.7px;font-weight:700;color:#000;letter-spacing:0.000px;right:160.40px;">0.00</div>
<div class="t" id="t156" style="top:527.87px;font-size:8.7px;font-weight:700;color:#000;letter-spacing:0.000px;right:95.10px;">0.00</div>
<div class="t" id="t157" style="top:527.87px;font-size:8.7px;font-weight:700;color:#000;letter-spacing:0.000px;right:30.20px;">0.00</div>
<div class="t" id="t158" style="top:577.90px;font-size:9.6px;font-weight:400;color:#333;letter-spacing:-0.005px;left:80.80px;">How To</div>
<div class="t" id="t159" style="top:577.90px;font-size:9.6px;font-weight:400;color:#333;letter-spacing:-0.046px;left:130.20px;">Main Inputs</div>
<div class="t" id="t160" style="top:577.90px;font-size:9.6px;font-weight:400;color:#444;letter-spacing:-0.358px;left:196.90px;">Revenue</div>
<div class="t" id="t161" style="top:577.90px;font-size:9.6px;font-weight:400;color:#444;letter-spacing:-0.350px;left:250.40px;">General Ex</div>
<div class="t" id="t162" style="top:577.90px;font-size:9.6px;font-weight:400;color:#444;letter-spacing:-0.023px;left:311.80px;">Working Capital</div>
<div class="t" id="t163" style="top:577.90px;font-size:9.6px;font-weight:400;color:#444;letter-spacing:-0.559px;left:396.20px;">CapEx</div>
<div class="t" id="t164" style="top:577.90px;font-size:9.6px;font-weight:400;color:#444;letter-spacing:-0.053px;left:438.40px;">Funding</div>
<div class="t" id="t165" style="top:577.90px;font-size:9.6px;font-weight:400;color:#444;letter-spacing:-0.116px;left:490.30px;">Income Statement</div>
<div class="t" id="t166" style="top:577.90px;font-size:9.6px;font-weight:400;color:#444;letter-spacing:-0.359px;left:584.10px;">Cash Flow</div>
<div class="t" id="t167" style="top:575.60px;font-size:9.7px;font-weight:400;color:#111;letter-spacing:-0.287px;-webkit-text-stroke:.25px #111;left:643.00px;">Balance Sheet</div>
<div class="t" id="t168" style="top:577.90px;font-size:9.6px;font-weight:400;color:#333;letter-spacing:-0.395px;left:719.60px;">Supplies Expenses</div>
<div class="t" id="t169" style="top:595.60px;font-size:7.7px;font-weight:400;color:#444;letter-spacing:-0.587px;left:7.60px;">Ready</div>
<div class="t" id="t170" style="top:595.60px;font-size:7.7px;font-weight:700;color:#333;letter-spacing:-0.407px;left:73.20px;">Accessibility: Investigate</div>
<div class="t" id="t171" style="top:595.60px;font-size:7.2px;font-weight:400;color:#444;letter-spacing:-0.548px;left:1002.90px;">100%</div>
</body></html>
